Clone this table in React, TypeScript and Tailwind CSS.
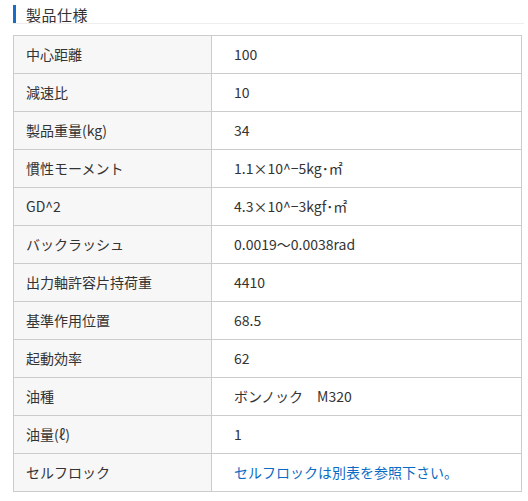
const ROWS: [string, React.ReactNode][] = [
  ["中心距離", "100"],
  ["減速比", "10"],
  ["製品重量(kg)", "34"],
  ["慣性モーメント", "1.1×10^−5kg･㎡"],
  ["GD^2", "4.3×10^−3kgf･㎡"],
  ["バックラッシュ", "0.0019～0.0038rad"],
  ["出力軸許容片持荷重", "4410"],
  ["基準作用位置", "68.5"],
  ["起動効率", "62"],
  ["油種", "ボンノック　M320"],
  ["油量(ℓ)", "1"],
  [
    "セルフロック",
    <a href="#" className="text-[#0a6bc4]">
      セルフロックは別表を参照下さい。
    </a>,
  ],
];

export default function App() {
  return (
    <div className="min-h-[501px] w-[528px] bg-white pt-[5px] font-['Noto_Sans_CJK_JP','Noto_Sans',sans-serif] text-[#333]">
      {/* Heading */}
      <div className="ml-[13px] mr-[4px] flex h-[18px] items-center border-l-[3px] border-[#1a6cc9] pl-[10px] text-[15px] leading-none tracking-[0.5px]">
        製品仕様
      </div>
      <div className="ml-[13px] mr-[4px] border-b border-[#eee]" />

      <table className="mt-[11px] ml-[13px] w-[509px] border-collapse text-[14px]">
        <tbody>
          {ROWS.map(([label, value], i) => (
            <tr key={i} className="h-[38px]">
              <th className="w-[198px] border border-[#ccc] bg-[#f7f7f7] pl-[12px] text-left font-normal">
                {label}
              </th>
              <td className="border border-[#ccc] pl-[22px]">{value}</td>
            </tr>
          ))}
        </tbody>
      </table>
    </div>
  );
}
